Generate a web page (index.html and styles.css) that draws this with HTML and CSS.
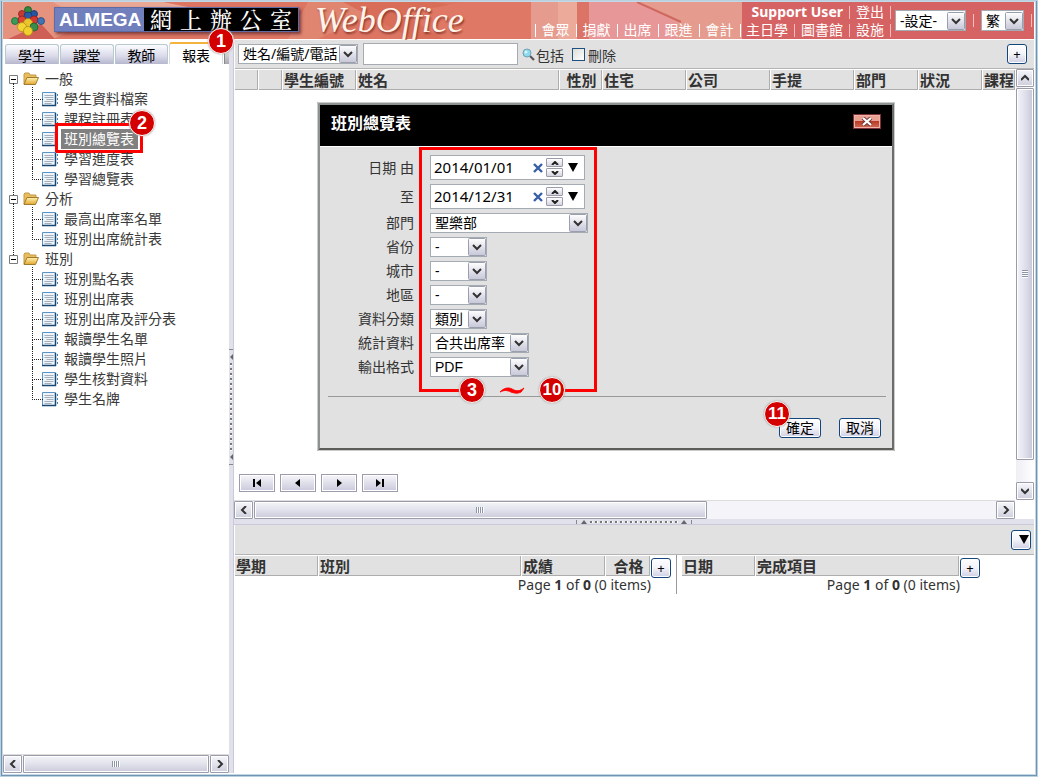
FILE: index.html
```html
<!DOCTYPE html>
<html lang="zh-Hant">
<head>
<meta charset="utf-8">
<title>WebOffice</title>
<link rel="stylesheet" href="styles.css">
</head>
<body>
<div class="window">
  <svg class="defs" width="0" height="0" aria-hidden="true">
    <defs>
      <linearGradient id="gold" x1="0" y1="0" x2="0" y2="1"><stop offset="0" stop-color="#fff3b0"/><stop offset="1" stop-color="#e3a62e"/></linearGradient>
      <symbol id="folder" viewBox="0 0 16 14">
        <path d="M1 12V2l1-1h4l1 2h6v3" fill="#e8bd5b" stroke="#c39a48"/>
        <path d="M1 12.500 4 5.500h11.500l-3 7z" fill="url(#gold)" stroke="#a07c30"/>
      </symbol>
      <symbol id="report" viewBox="0 0 16 15">
        <path d="M.5.5h13v13H.5z" fill="#eef4fa" stroke="#5b93c5"/>
        <path d="M0 13.500h14M13.500 1v13" stroke="#174873" stroke-width="1.500"/>
        <path d="M2.500 3.500h9M2.500 5.500h9M4.500 7.500h7M2.500 9.500h9M2.500 11.500h7" stroke="#a3afbb"/>
        <path d="M15.500 2v2M15.500 6v2M15.500 10v2" stroke="#3f86c0"/>
      </symbol>
      <symbol id="minus" viewBox="0 0 9 9">
        <path d="M.5.5h8v8h-8z" fill="#fff" stroke="#7b7b7b"/><path d="M2 4.500h5" stroke="#000"/>
      </symbol>
      <symbol id="chev-l" viewBox="0 0 8 8"><path d="M6 0 2 4l4 4" fill="none" stroke="#333" stroke-width="2"/></symbol>
      <symbol id="chev-r" viewBox="0 0 8 8"><path d="m2 0 4 4-4 4" fill="none" stroke="#333" stroke-width="2"/></symbol>
      <symbol id="chev-u" viewBox="0 0 8 8"><path d="m0 6 4-4 4 4" fill="none" stroke="#333" stroke-width="2"/></symbol>
      <symbol id="chev-d" viewBox="0 0 8 8"><path d="m0 2 4 4 4-4" fill="none" stroke="#333" stroke-width="2"/></symbol>
      <symbol id="cross" viewBox="0 0 10 10"><path d="m1 1 8 8M9 1 1 9" stroke="#365fa5" stroke-width="2.400"/></symbol>
      <symbol id="tri-d" viewBox="0 0 10 9"><path d="M0 0h10L5 9z" fill="#000"/></symbol>
    </defs>
  </svg>

  <header class="banner">
    <svg class="banner-art" viewBox="0 0 745 37" preserveAspectRatio="xMinYMin slice" aria-hidden="true">
      <rect width="1200" height="37" fill="#dc7562"/>
      <path d="M0 0h130L50 37H0z" fill="#e5937e"/>
      <path d="M5 37 38 22l14 15z" fill="#cf5e55"/>
      <path d="M50 0h110l30 6H60z" fill="#e9a896"/>
      <path d="M305 0h90l-80 37h-30z" fill="#e08570"/>
      <path d="M340 0h90l90 14v23H410z" fill="#d86d58"/>
      <path d="m400 12 60-12h80v37H440z" fill="#df7864"/>
      <rect x="528" width="672" height="37" fill="#e59b8d"/>
      <path d="M555 0h30l-6 37h-24z" fill="#ecaa9b"/>
      <path d="M574 0h60l40 20v17H574z" fill="#e79797"/>
      <path d="M574 0h12v37h-12z" fill="#db7466"/>
      <path d="m634 0 44 20" stroke="#d06860" stroke-width="2" fill="none"/>
    </svg>
    <div class="brand">
      <svg class="brand-mark" width="34" height="30" viewBox="0 0 34 30" aria-hidden="true">
        <g stroke-width=".8">
          <circle cx="17" cy="4" r="3.500" fill="#2f8a3e" stroke="#175526"/>
          <circle cx="11" cy="8" r="3.500" fill="#c63a35" stroke="#872522"/>
          <circle cx="23" cy="8" r="3.500" fill="#2554a0" stroke="#17366c"/>
          <circle cx="17" cy="10" r="4" fill="#285aa8" stroke="#17366c"/>
          <circle cx="4" cy="15" r="3.500" fill="#3a9a59" stroke="#1f6b38"/>
          <circle cx="11" cy="14" r="4" fill="#dd4437" stroke="#8e221d"/>
          <circle cx="23" cy="14" r="4" fill="#d43731" stroke="#8e221d"/>
          <circle cx="30" cy="15" r="3.500" fill="#3f74b6" stroke="#21497c"/>
          <circle cx="17" cy="17" r="4.500" fill="#e9c42d" stroke="#a98215"/>
          <circle cx="11" cy="21" r="4.500" fill="#f3d434" stroke="#b38d18"/>
          <circle cx="23" cy="21" r="4" fill="#3a8c4a" stroke="#1f5f2c"/>
          <circle cx="17" cy="25" r="4.500" fill="#f1cf2c" stroke="#b38d18"/>
        </g>
      </svg>
      <div class="brand-plate">
        <span class="brand-name">ALMEGA</span>
        <span class="brand-zh"><span>網</span><span>上</span><span>辦</span><span>公</span><span>室</span></span>
      </div>
      <span class="brand-product">WebOffice</span>
    </div>
    <nav class="modules"><a href="#">會眾</a><a href="#">捐獻</a><a href="#">出席</a><a href="#">跟進</a><a href="#">會計</a></nav>
    <div class="account">
      <div class="account-links">
        <div class="link-row"><a href="#"><b>Support User</b></a><a href="#">登出</a></div>
        <div class="link-row"><a href="#">主日學</a><a href="#">圖書館</a><a href="#">設施</a></div>
      </div>
      <select class="pick pick-settings" aria-label="設定"><option>-設定-</option></select>
      <span class="bar"></span>
      <select class="pick pick-lang" aria-label="語言"><option>繁</option></select>
      <span class="bar"></span>
    </div>
  </header>

  <div class="main">
    <aside class="sidebar">
      <div class="tabs" role="tablist">
        <button class="tab" role="tab">學生</button>
        <button class="tab" role="tab">課堂</button>
        <button class="tab" role="tab">教師</button>
        <button class="tab tab-on" role="tab" aria-selected="true">報表</button>
        <span class="tab-end"></span>
        <span class="badge badge-1">1</span>
      </div>
      <ul class="tree">
        <li class="branch"><div class="node"><svg class="i-minus"><use href="#minus"/></svg><svg class="i-folder"><use href="#folder"/></svg>一般</div>
          <ul>
            <li><svg><use href="#report"/></svg><a href="#">學生資料檔案</a></li>
            <li><svg><use href="#report"/></svg><a href="#">課程註冊表</a></li>
            <li><svg><use href="#report"/></svg><a href="#" class="picked">班別總覽表</a><span class="mark mark-node"></span><span class="badge badge-2">2</span></li>
            <li><svg><use href="#report"/></svg><a href="#">學習進度表</a></li>
            <li><svg><use href="#report"/></svg><a href="#">學習總覽表</a></li>
          </ul>
        </li>
        <li class="branch"><div class="node"><svg class="i-minus"><use href="#minus"/></svg><svg class="i-folder"><use href="#folder"/></svg>分析</div>
          <ul>
            <li><svg><use href="#report"/></svg><a href="#">最高出席率名單</a></li>
            <li><svg><use href="#report"/></svg><a href="#">班別出席統計表</a></li>
          </ul>
        </li>
        <li class="branch"><div class="node"><svg class="i-minus"><use href="#minus"/></svg><svg class="i-folder"><use href="#folder"/></svg>班別</div>
          <ul>
            <li><svg><use href="#report"/></svg><a href="#">班別點名表</a></li>
            <li><svg><use href="#report"/></svg><a href="#">班別出席表</a></li>
            <li><svg><use href="#report"/></svg><a href="#">班別出席及評分表</a></li>
            <li><svg><use href="#report"/></svg><a href="#">報讀學生名單</a></li>
            <li><svg><use href="#report"/></svg><a href="#">報讀學生照片</a></li>
            <li><svg><use href="#report"/></svg><a href="#">學生核對資料</a></li>
            <li><svg><use href="#report"/></svg><a href="#">學生名牌</a></li>
          </ul>
        </li>
      </ul>
      <div class="hscroll">
        <button class="sb" aria-label="向左"><svg><use href="#chev-l"/></svg></button>
        <span class="thumb thumb-full"><i class="grip"></i></span>
        <button class="sb" aria-label="向右"><svg><use href="#chev-r"/></svg></button>
      </div>
    </aside>

    <div class="split-v"><span class="handle-v"><i class="arr-l"></i><i class="dots-v"></i><i class="arr-l"></i></span></div>

    <div class="content">
      <div class="upper">
        <div class="toolbar">
          <select class="pick pick-field" aria-label="搜尋欄位"><option>姓名/編號/電話</option></select>
          <input class="search" type="text" aria-label="搜尋">
          <svg class="i-lens" viewBox="0 0 13 13" aria-hidden="true"><path d="m8 8 4 4" stroke="#555" stroke-width="2.200"/><circle cx="5" cy="5" r="4" fill="#8fd9ef" stroke="#6fa0b8"/><circle cx="4" cy="4" r="1.500" fill="#d6f4fb"/></svg>
          <span class="tool-text">包括</span>
          <input class="check" type="checkbox" id="del"><label for="del">刪除</label>
          <button class="btn btn-sq push">+</button>
        </div>
        <div class="list">
          <div class="list-main">
            <table class="grid">
              <colgroup><col class="c24"><col class="c24"><col class="c74"><col><col class="c42"><col class="c84"><col class="c84"><col class="c84"><col class="c64"><col class="c64"><col class="c34"></colgroup>
              <thead><tr><th></th><th></th><th>學生編號</th><th>姓名</th><th class="mid">性別</th><th>住宅</th><th>公司</th><th>手提</th><th>部門</th><th>狀況</th><th>課程</th></tr></thead>
            </table>
            <div class="pager">
              <button aria-label="第一頁"><svg viewBox="0 0 10 8"><path d="M1 0h2v8H1zM9 0v8L4 4z"/></svg></button>
              <button aria-label="上一頁"><svg viewBox="0 0 10 8"><path d="M7 0v8L2 4z"/></svg></button>
              <button aria-label="下一頁"><svg viewBox="0 0 10 8"><path d="M3 0v8l5-4z"/></svg></button>
              <button aria-label="最後頁"><svg viewBox="0 0 10 8"><path d="M1 0v8l5-4zM7 0h2v8H7z"/></svg></button>
            </div>
          </div>
          <div class="vscroll">
            <button class="sb" aria-label="向上"><svg><use href="#chev-u"/></svg></button>
            <span class="thumb thumb-v"><i class="grip grip-h"></i></span>
            <span class="track-v"></span>
            <button class="sb" aria-label="向下"><svg><use href="#chev-d"/></svg></button>
          </div>
        </div>
        <div class="hscroll hscroll-list">
          <button class="sb" aria-label="向左"><svg><use href="#chev-l"/></svg></button>
          <span class="thumb thumb-list"><i class="grip"></i></span>
          <span class="track-h"></span>
          <button class="sb" aria-label="向右"><svg><use href="#chev-r"/></svg></button>
        </div>

        <section class="dialog" role="dialog" aria-labelledby="dlg-title">
          <div class="dialog-head">
            <h2 id="dlg-title">班別總覽表</h2>
            <button class="close" aria-label="關閉"><svg viewBox="0 0 12 9"><path d="m2 1 8 7M10 1 2 8" stroke="#6b3a3a" stroke-width="4"/><path d="m2 1 8 7M10 1 2 8" stroke="#fff" stroke-width="2.200"/></svg></button>
          </div>
          <div class="dialog-body">
            <form class="form">
              <label for="d1">日期 由</label>
              <span class="date"><input id="d1" type="text" value="2014/01/01"><button type="button" aria-label="清除"><svg class="i-x"><use href="#cross"/></svg></button><span class="spin"><button type="button" aria-label="加"><svg viewBox="0 0 8 4"><path d="m1 4 3-3 3 3" fill="none" stroke="#222" stroke-width="2"/></svg></button><button type="button" aria-label="減"><svg viewBox="0 0 8 4"><path d="m1 0 3 3 3-3" fill="none" stroke="#222" stroke-width="2"/></svg></button></span><button type="button" aria-label="日曆"><svg class="i-tri"><use href="#tri-d"/></svg></button></span>
              <label for="d2">至</label>
              <span class="date"><input id="d2" type="text" value="2014/12/31"><button type="button" aria-label="清除"><svg class="i-x"><use href="#cross"/></svg></button><span class="spin"><button type="button" aria-label="加"><svg viewBox="0 0 8 4"><path d="m1 4 3-3 3 3" fill="none" stroke="#222" stroke-width="2"/></svg></button><button type="button" aria-label="減"><svg viewBox="0 0 8 4"><path d="m1 0 3 3 3-3" fill="none" stroke="#222" stroke-width="2"/></svg></button></span><button type="button" aria-label="日曆"><svg class="i-tri"><use href="#tri-d"/></svg></button></span>
              <label for="s1">部門</label><select id="s1" class="pick w-dept"><option>聖樂部</option></select>
              <label for="s2">省份</label><select id="s2" class="pick w-short"><option>-</option></select>
              <label for="s3">城市</label><select id="s3" class="pick w-short"><option>-</option></select>
              <label for="s4">地區</label><select id="s4" class="pick w-short"><option>-</option></select>
              <label for="s5">資料分類</label><select id="s5" class="pick w-short"><option>類別</option></select>
              <label for="s6">統計資料</label><select id="s6" class="pick w-mid"><option>合共出席率</option></select>
              <label for="s7">輸出格式</label><select id="s7" class="pick w-mid pdf"><option>PDF</option></select>
              <span class="mark mark-form"></span>
              <span class="badge badge-3">3</span>
              <svg class="tilde" viewBox="0 0 26 8" aria-hidden="true"><path d="M1 6C5 2 9 1 13 3c5 3 8 2 12-1l-3 4c-4 2-7 1-10 0C8 4 5 4 1 6z" fill="#f00" stroke="#f00"/></svg>
              <span class="badge badge-10">10</span>
            </form>
            <div class="actions">
              <span class="ok-wrap"><button class="btn">確定</button><span class="badge badge-11">11</span></span>
              <button class="btn">取消</button>
            </div>
          </div>
        </section>
      </div>

      <div class="split-h"><span class="handle-h"><i class="arr-u"></i><i class="dots-h"></i><i class="arr-u"></i></span></div>

      <div class="lower">
        <div class="toolbar toolbar-low"><button class="btn btn-sq btn-drop push" aria-label="展開"><svg class="i-tri"><use href="#tri-d"/></svg></button></div>
        <div class="panels">
          <div class="panel panel-terms">
            <div class="panel-grid">
              <table class="grid"><colgroup><col class="c84"><col><col class="c84"><col class="c46"></colgroup>
              <thead><tr><th>學期</th><th>班別</th><th>成績</th><th class="mid">合格</th></tr></thead></table>
              <p class="count">Page <b>1</b> of <b>0</b> (0 items)</p>
            </div>
            <button class="btn btn-sq">+</button>
          </div>
          <div class="panel panel-done">
            <div class="panel-grid">
              <table class="grid"><colgroup><col class="c74"><col></colgroup>
              <thead><tr><th>日期</th><th>完成項目</th></tr></thead></table>
              <p class="count">Page <b>1</b> of <b>0</b> (0 items)</p>
            </div>
            <button class="btn btn-sq">+</button>
          </div>
        </div>
      </div>
    </div>
  </div>
</div>
</body>
</html>
```
FILE: styles.css
```css
* { box-sizing: border-box; }
body { margin: 0; background: #dbe7f0; color: #333; font: 14px/20px "Noto Sans", "Noto Sans CJK TC", sans-serif; }
button, input, select { font: inherit; color: #000; margin: 0; padding: 0; }
a { color: inherit; text-decoration: none; }
ul { list-style: none; margin: 0; padding: 0; }
svg { display: block; flex: none; }
.defs { position: absolute; }

.window { display: flex; flex-direction: column; min-height: 100vh; border: solid #6f95b3; border-width: 1px 2px 2px; outline: 1px solid #b9d0e0; outline-offset: -1px; box-shadow: inset 0 0 0 1px #c3d7e5; padding: 1px 2px 2px 1px; background: #fff; }

/* banner */
.banner { position: relative; display: flex; height: 37px; color: #fff; background: #e59b8d; }
.banner-art { position: absolute; inset: 0; width: 745px; height: 37px; }
.brand { position: relative; display: flex; align-items: center; flex: 1; padding-left: 8px; }
.brand-mark { margin-right: 9px; }
.brand-plate { display: flex; height: 25px; margin: 0 16px 3px 0; border: 1px solid #5e6ca6; box-shadow: 2px 2px 3px #7a3a3a; background: #000; line-height: 23px; }
.brand-name { width: 89px; padding-left: 4px; background: #7180bd; font: bold 19px/23px "Liberation Sans", sans-serif; }
.brand-zh { display: flex; gap: 8px; padding: 0 6px; font: 500 22px/22px "Noto Serif CJK TC", "Noto Sans CJK TC", serif; }
.brand-product { font: italic 36px/36px "Liberation Serif", serif; color: #fff3ea; text-shadow: 1px 2px 2px #8c3a30; padding-bottom: 1px; }
.modules { position: relative; display: flex; align-items: flex-end; padding-right: 1px; }
.modules a, .link-row a { line-height: 18px; }
.modules a { display: flex; align-items: center; }
.modules a::before { content: ""; width: 1px; height: 13px; margin: 0 6px; background: #fff; }
.modules a:last-child::after { content: ""; width: 1px; height: 13px; margin-left: 6px; background: #fff; }
.account { position: relative; display: flex; align-items: center; padding: 0 2px 0 4px; background: #d66363; }
.account-links { display: flex; flex-direction: column; align-items: flex-end; align-self: stretch; justify-content: flex-end; margin-right: 4px; }
.link-row { display: flex; }
.link-row a { display: flex; align-items: center; padding-left: 6px; }
.link-row + .link-row a:first-child { padding-left: 0; }
.link-row a::after { content: ""; width: 1px; height: 13px; margin-left: 6px; background: #fbb; }
.bar { width: 1px; height: 13px; margin: 0 7px; background: #fbb; }
.bar:last-child { margin-right: 0; }

/* controls */
.pick { appearance: none; height: 20px; padding: 0 19px 0 4px; border: 1px solid #a4abb3; border-radius: 0; line-height: 18px; background: #fff url("data:image/svg+xml,%3Csvg xmlns='http://www.w3.org/2000/svg' width='18' height='18'%3E%3ClinearGradient id='g' x1='0' y1='0' x2='0' y2='1'%3E%3Cstop offset='0' stop-color='%23fff'/%3E%3Cstop offset='1' stop-color='%23c6c6d8'/%3E%3C/linearGradient%3E%3Crect x='.5' y='.5' width='17' height='17' rx='1' fill='url(%23g)' stroke='%239a9fad'/%3E%3Cpath d='m5 7 4 4 4-4' fill='none' stroke='%23333' stroke-width='2'/%3E%3C/svg%3E") right center no-repeat; }
.pick-settings { width: 71px; height: 21px; }
.pick-lang { width: 43px; height: 21px; }
.pick-field { width: 120px; padding-right: 16px; }
.w-dept { width: 158px; }
.w-short { width: 57px; }
.w-mid { width: 99px; }
.pdf { font-family: "Liberation Sans", sans-serif; }
.btn { display: inline-flex; align-items: center; justify-content: center; width: 42px; height: 20px; border: 1px solid #12467c; border-radius: 3px; box-shadow: inset 0 0 0 1px #fff; background: linear-gradient(#fff, #f2f2fa 50%, #cfcfe4); line-height: 16px; }
.btn-sq { width: 20px; flex: none; font-size: 13px; }
.btn-drop { justify-content: flex-end; padding-right: 1px; }
.push { margin-left: auto; }

/* sidebar */
.main { display: flex; flex: 1; padding-top: 1px; }
.sidebar { display: flex; flex-direction: column; width: 226px; flex: none; }
.tabs { position: relative; display: flex; align-items: flex-end; gap: 1px; height: 24px; padding-left: 2px; }
.tab { width: 54px; height: 20px; padding-top: 3px; border: 1px solid #b9c9cf; border-bottom: 0; border-radius: 3px 3px 0 0; background: linear-gradient(#fcfcff, #d9d9ea 60%, #b6b6cd); line-height: 16px; overflow: hidden; }
.tab-on { height: 22px; border-color: #d6dde0; border-top: 2px solid #f4b33c; background: #fff; }
.tab-end { width: 5px; height: 12px; margin-left: auto; background: linear-gradient(#ddd, #a8a8b0); border-left: 1px solid #888; }
.tree { flex: 1; padding: 5px 0 0 6px; color: #3a3a3a; }
.branch { position: relative; }
.branch:not(:last-child)::before { content: ""; position: absolute; left: 4px; top: 14px; bottom: -6px; border-left: 1px dotted #222; }
.node { display: flex; align-items: center; height: 20px; }
.i-minus { width: 9px; height: 9px; margin-right: 5px; }
.i-folder { width: 16px; height: 14px; margin-right: 6px; }
.tree ul { padding-left: 23px; }
.tree ul li { position: relative; display: flex; align-items: center; height: 20px; padding-left: 10px; }
.tree ul li::before { content: ""; position: absolute; left: 0; top: -2px; width: 10px; height: 12px; border: dotted #222; border-width: 0 0 1px 1px; }
.tree ul li:not(:last-child)::after { content: ""; position: absolute; left: 0; top: 10px; height: 10px; border-left: 1px dotted #222; }
.tree ul svg { width: 16px; height: 15px; margin-right: 3px; }
.tree ul a { padding: 0 3px; white-space: nowrap; }
.tree .picked { background: #808080; color: #fff; padding-right: 4px; }

.mark { position: absolute; border: 3px solid #f00; pointer-events: none; }
.mark-node { left: 23px; top: -6px; width: 88px; height: 30px; }
.badge { position: absolute; z-index: 3; width: 26px; height: 26px; border: 1px solid #fff; border-radius: 50%; background: #d40000; box-shadow: 0 0 2px #999; color: #fff; font: bold 18px/24px "Liberation Sans", sans-serif; text-align: center; }
.badge-1 { left: 205px; top: -12px; }
.badge-2 { left: 97px; top: -19px; }

/* scroll bars */
.hscroll, .vscroll { display: flex; gap: 1px; }
.hscroll { height: 19px; border-top: 1px solid #ddd; background: #f4f4f9; }
.sb { display: flex; align-items: center; justify-content: center; width: 19px; height: 18px; flex: none; border: 1px solid #9a9ca9; border-radius: 1px; box-shadow: inset 0 0 0 1px #fff; background: linear-gradient(#f6f6fb, #cfcfde); }
.sb svg { width: 8px; height: 8px; }
.thumb { display: flex; align-items: center; justify-content: center; height: 18px; border: 1px solid #9a9ca9; border-radius: 1px; box-shadow: inset 0 0 0 1px #fff; background: linear-gradient(#f3f3f8, #e2e2ec 50%, #cacadb); }
.thumb-full { flex: 1; }
.thumb-list { width: 58%; }
.track-h, .track-v { flex: 1; }
.grip { width: 8px; height: 6px; background: repeating-linear-gradient(90deg, #8c94a8 0 1px, #fff 1px 2px); }
.grip-h { height: 8px; width: 6px; background: repeating-linear-gradient(#8c94a8 0 1px, #fff 1px 2px); }
.vscroll { flex-direction: column; width: 18px; background: linear-gradient(90deg, #eeeef4, #fff); }
.vscroll .sb { width: 18px; }
.thumb-v { width: 18px; height: 372px; background: linear-gradient(90deg, #f3f3f8, #e0e0ec 50%, #c6c6d9); }
.hscroll-list { margin-right: 19px; }

/* splitters */
.split-v { display: flex; align-items: center; justify-content: flex-end; width: 5px; flex: none; background: #e1e1ec; border-right: 1px solid #c9c9da; }
.handle-v { display: flex; flex-direction: column; align-items: center; justify-content: space-between; width: 4px; height: 116px; padding: 4px 0; border: solid #888; border-width: 1px 0; }
.dots-v { width: 2px; height: 88px; background: repeating-linear-gradient(#777 0 2px, #fff 2px 3px, #e1e1ec 3px 5px); }
.arr-l { border: solid transparent; border-width: 3px 3px 3px 0; border-right-color: #666; }
.split-h { display: flex; justify-content: center; align-items: center; height: 6px; background: #e1e1ec; border-bottom: 1px solid #c9c9da; }
.handle-h { display: flex; align-items: center; justify-content: space-between; width: 116px; height: 4px; padding: 0 4px; border: solid #888; border-width: 0 1px; }
.dots-h { width: 88px; height: 2px; background: repeating-linear-gradient(90deg, #777 0 2px, #fff 2px 3px, #e1e1ec 3px 5px); }
.arr-u { border: solid transparent; border-width: 0 3px 4px; border-bottom-color: #666; }

/* list */
.content { display: flex; flex-direction: column; flex: 1; min-width: 0; }
.upper { position: relative; display: flex; flex-direction: column; flex: 0 0 479px; }
.toolbar { display: flex; align-items: center; height: 29px; margin-left: 1px; padding: 0 7px 0 3px; border-bottom: 1px solid #b4b4b4; background: #e1e1e1; }
.search { width: 155px; height: 22px; margin: 0 4px 0 5px; padding: 0 4px; border: 1px solid #a4abb3; background: #fff; }
.i-lens { width: 13px; height: 13px; margin-right: 1px; }
.tool-text { margin-right: 8px; }
.tool-text, .toolbar label { padding-top: 3px; }
.check { appearance: none; width: 13px; height: 13px; margin-right: 3px; border: 1px solid #1c5180; background: linear-gradient(135deg, #dcdcd7, #fff); }
.list { display: flex; flex: 1; }
.list-main { display: flex; flex-direction: column; justify-content: space-between; flex: 1; min-width: 0; padding-left: 1px; }
.grid { width: 100%; table-layout: fixed; border-collapse: separate; border-spacing: 0; }
.grid th { height: 21px; padding: 0 0 0 1px; border: solid #fff; border-width: 1px 1px 0 0; box-shadow: inset -1px -1px 0 #adadad; background: #e1e1e1; font-size: 15px; line-height: 20px; text-align: left; white-space: nowrap; overflow: hidden; }
.grid .mid { text-align: center; }
.c24 { width: 24px; } .c34 { width: 33px; } .c42 { width: 43px; } .c46 { width: 45px; }
.c64 { width: 64px; } .c74 { width: 74px; } .c84 { width: 84px; }
.pager { display: flex; gap: 5px; padding: 0 0 8px 4px; }
.pager button { display: flex; align-items: center; justify-content: center; width: 36px; height: 18px; border: 1px solid #9c9cab; box-shadow: inset 0 0 0 1px #fff; background: linear-gradient(#f6f6fa, #c9c9dc); }
.pager svg { width: 10px; height: 8px; }

/* dialog */
.dialog { position: absolute; left: 83px; top: 62px; z-index: 2; width: 578px; border: 3px solid #777b7b; border-color: #8d9393 #6a6d6a #5c5c58 #8d9393; border-radius: 2px; outline: 1px solid #ccc; outline-offset: -1px; background: #e1e1e1; }
.dialog-head { display: flex; justify-content: space-between; height: 41px; padding: 8px 11px 0 11px; background: #000; }
.dialog h2 { margin: 0; color: #fff; font-size: 16px; line-height: 20px; }
.close { display: flex; align-items: center; justify-content: center; width: 28px; height: 15px; margin-top: 1px; border: 1px solid #7c3038; box-shadow: inset 0 0 0 1px #f0b0a4; background: linear-gradient(#e8a093 45%, #bb3a25 50%, #d06c58); }
.close svg { width: 12px; height: 9px; }
.dialog-body { padding: 8px 6px 10px 8px; border-top: 1px solid #fff; }
.form { position: relative; display: grid; grid-template-columns: 86px 1fr; gap: 4px 16px; align-items: center; padding-bottom: 19px; border-bottom: 1px solid #999; }
.form label { text-align: right; white-space: nowrap; }
.date { display: flex; align-items: center; width: 155px; height: 25px; padding-right: 6px; border: 1px solid #a4abb3; background: #fff; }
.date input { flex: 1; min-width: 0; padding: 0 0 2px 3px; border: 0; font-size: 15px; outline: 0; background: none; }
.date button { padding: 0; border: 0; background: none; }
.i-x { width: 10px; height: 10px; }
.spin { display: flex; flex-direction: column; gap: 1px; margin: 0 5px 0 3px; }
.date .spin button { display: flex; align-items: center; justify-content: center; width: 17px; height: 9px; border: 1px solid #9a9ca9; border-radius: 1px; background: linear-gradient(#fff, #d4d4e0); }
.spin svg { width: 8px; height: 4px; }
.i-tri { width: 10px; height: 9px; }
.mark-form { left: 91px; top: -8px; width: 178px; height: 245px; clip-path: polygon(0 0, 100% 0, 100% 100%, 133px 100%, 133px 90%, 54px 90%, 54px 100%, 0 100%); }
.badge-3 { left: 131px; top: 222px; }
.badge-10 { left: 211px; top: 222px; font-size: 17px; }
.tilde { position: absolute; left: 171px; top: 231px; width: 26px; height: 8px; }
.actions { display: flex; justify-content: flex-end; gap: 18px; padding: 21px 5px 0 0; }
.ok-wrap { position: relative; display: flex; }
.badge-11 { left: -15px; top: -17px; font-size: 17px; }

/* lower pane */
.lower { flex: 1; }
.toolbar-low { padding-right: 3px; height: 30px; }
.panels { display: flex; padding-left: 1px; }
.panel { display: flex; align-items: flex-start; }
.panel > .btn { margin-top: 3px; }
.panel-grid { width: 416px; }
.panel-terms { width: 442px; border-right: 1px solid #999; }
.panel-done { padding-left: 5px; }
.panel-done .panel-grid { width: 278px; }
.count { margin: 0; line-height: 18px; text-align: right; }
```
